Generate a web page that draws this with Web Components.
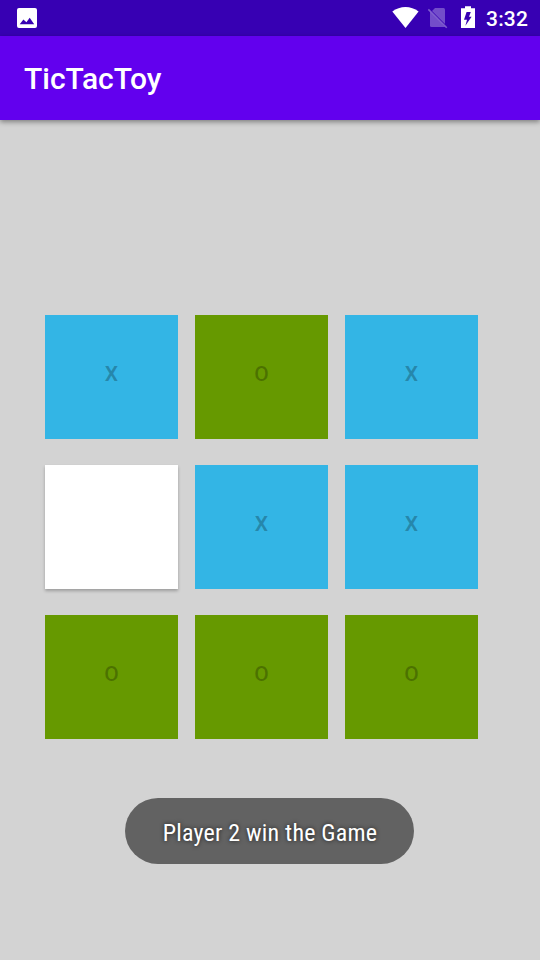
<!DOCTYPE html>
<html lang="en">
<head>
<meta charset="utf-8">
<title>TicTacToy</title>
<style>
html, body { margin: 0; height: 100%; }
body { font-family: Roboto, "Liberation Sans", sans-serif; background: #d3d3d3; overflow: hidden; }
</style>
</head>
<body>
<game-screen></game-screen>
<script>
const define = (name, html) => customElements.define(name, class extends HTMLElement {
  constructor() {
    super();
    this.attachShadow({ mode: 'open' }).innerHTML = html;
  }
});

define('status-bar', `
<style>
:host { display: flex; box-sizing: border-box; height: 36px; padding: 0 12px 0 17px; background: #3700b3; color: #fff; }
svg { display: block; flex: none; }
.gap { flex: 1; }
.photo { margin-top: 8px; }
.time { width: 42px; font-size: 21px; font-weight: 500; line-height: 38px; letter-spacing: .2px; white-space: nowrap; margin-left: 10px; }
</style>
<svg class="photo" width="20" height="20" viewBox="0 0 20 20"><path fill="#fff" fill-rule="evenodd" d="M2 0H18Q20 0 20 2V18Q20 20 18 20H2Q0 20 0 18V2Q0 0 2 0ZM2.7 16.2H17.2L12.7 9.8L9.4 14.2L6.4 11.6Z"/></svg>
<span class="gap"></span>
<svg width="84" height="36" viewBox="392 0 84 36">
<path fill="#fff" d="M392.3 11.6C400 5.5 411 5.5 418.6 11.6L405.5 28Z"/>
<g fill="#fff"><path opacity=".3" d="M435 8H443.5Q445 8 445 9.5V24L432 11Z"/><path opacity=".3" d="M430 12L445 27H431.5Q430 27 430 25.5Z"/><path opacity=".36" d="M428.9 8.8L447.3 27.2L446.2 28.3L427.8 9.9Z"/></g>
<path fill="#fff" fill-rule="evenodd" d="M465 6.2H471V8.2H475V28H461V8.2H465ZM466.6 12H470.8L469 16.8H471.6L465.4 25.8L467 19.8H464Z"/>
</svg>
<span class="time">3:32</span>`);

define('app-bar', `
<style>
:host { display: flex; align-items: center; box-sizing: border-box; height: 84px; padding: 0 24px; background: #6200ee; color: #fff; font-size: 30px; font-weight: 500; line-height: 35px; box-shadow: 0 2px 5px rgba(0,0,0,.4); }
</style><slot></slot>`);

define('game-board', `
<style>
:host { display: grid; grid-template-columns: repeat(3, 133px); grid-auto-rows: 124px; gap: 26px 17px; padding: 195px 0 0 45px; }
</style><slot></slot>`);

define('board-cell', `
<style>
:host { display: flex; align-items: center; justify-content: center; box-sizing: border-box; padding-bottom: 6px; font-size: 21px; font-weight: 500; line-height: 25px; color: rgba(0,0,0,.26); background: #fff; }
:host([player="1"]) { background: #33b5e5; font-weight: 600; }
:host([player="2"]) { background: #669900; }
:host(:not([player])) { box-shadow: 0 2px 3px rgba(0,0,0,.26); }
</style><slot></slot>`);

define('toast-message', `
<style>
:host { display: flex; align-items: center; justify-content: center; box-sizing: border-box; width: 289px; height: 66px; margin: 59px auto 0 125px; padding: 3px 0 0 1px; border-radius: 33px; background: #626262; color: #fff; font: 400 24px/28px "Roboto Condensed", Roboto, sans-serif; font-stretch: 75%; letter-spacing: .2px; white-space: nowrap; text-shadow: 0 0 4px rgba(0,0,0,.7); }
</style><span><slot></slot></span>`);

define('game-screen', `
<style>
:host { display: flex; flex-direction: column; width: 540px; height: 960px; background: #d3d3d3; }
</style>
<status-bar></status-bar>
<app-bar>TicTacToy</app-bar>
<game-board>
<board-cell player="1">X</board-cell><board-cell player="2">O</board-cell><board-cell player="1">X</board-cell>
<board-cell></board-cell><board-cell player="1">X</board-cell><board-cell player="1">X</board-cell>
<board-cell player="2">O</board-cell><board-cell player="2">O</board-cell><board-cell player="2">O</board-cell>
</game-board>
<toast-message>Player 2 win the Game</toast-message>`);
</script>
</body>
</html>
